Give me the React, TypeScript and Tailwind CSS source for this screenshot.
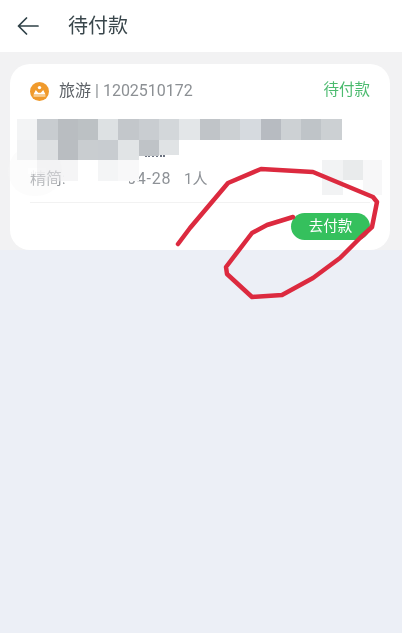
const FONT = "font-['Roboto','Noto_Sans_CJK_SC',sans-serif]";

// Mosaic cells as [column, row, colour], 20.3px grid starting at x=17
const MOSAIC: [number, number, string][] = [
  [0, 0, '#f3f4f5'], [1, 0, '#c8ccd0'], [2, 0, '#b9bdc1'], [3, 0, '#bcc1c4'], [4, 0, '#dde1e3'],
  [5, 0, '#c3c7cb'], [6, 0, '#c9cdd1'], [7, 0, '#d3d7da'], [8, 0, '#e3e6e8'], [9, 0, '#c0c4c8'],
  [10, 0, '#ccd0d3'], [11, 0, '#d6dadf'], [12, 0, '#b7bbc1'], [13, 0, '#cdd1d4'], [14, 0, '#bfc4c8'],
  [15, 0, '#ccd0d3'],
  [0, 1, '#f1f2f3'], [1, 1, '#dde0e2'], [2, 1, '#b9bdc1'], [3, 1, '#c9cdd0'], [4, 1, '#c8ccd0'],
  [5, 1, '#e1e4e6'],
  [1, 2, 'rgba(225,227,229,0.35)'], [2, 2, 'rgba(230,231,233,0.4)'], [4, 2, '#f4f5f6'], [5, 2, '#f8f8f9'],
];

const SCRIBBLE =
  '178,244 190,228 228,183 261,169 313,172 337,182 373,197 377,202 372,227 360,238 340,258 313,278 282,295 252,297 227,274 226,267 252,233 267,225 293,217';

function BackArrow() {
  return (
    <svg width="22" height="18" viewBox="0 0 22 18" className="shrink-0 text-[#2f4147]">
      <path
        d="M21 9 H1.5 M9.5 1 L1.5 9 L9.5 17"
        fill="none"
        stroke="currentColor"
        strokeWidth="1.7"
        strokeLinecap="round"
        strokeLinejoin="round"
      />
    </svg>
  );
}

function TripIcon() {
  return (
    <svg width="19" height="19" viewBox="0 0 19 19" className="shrink-0">
      <circle cx="9.5" cy="9.5" r="9.5" fill="#f09a2c" />
      <circle cx="9.5" cy="5.6" r="1.7" fill="#fff" />
      <path d="M3.5 12.6 L5.8 8 L8.2 10.8 H10.8 L13.2 8 L15.5 12.6 Z" fill="#fff" />
      <rect x="3.5" y="13.2" width="12" height="1.5" fill="#f8d9a8" />
    </svg>
  );
}

function Mosaic() {
  return (
    <div className="absolute left-[17px] top-[119px] grid grid-cols-[repeat(16,20.3px)] grid-rows-[repeat(3,20.5px)]">
      {MOSAIC.map(([col, row, color]) => (
        <div
          key={`${col}-${row}`}
          style={{ gridColumnStart: col + 1, gridRowStart: row + 1, backgroundColor: color }}
        />
      ))}
      {/* these two were cut short in the picture, over the leftover line of text */}
      <div className="col-start-7 row-start-2 h-[16px] bg-[#bfc3c7]" />
      <div className="col-start-8 row-start-2 h-[15px] bg-[#e0e3e5]" />
    </div>
  );
}

export default function App() {
  return (
    <div className={`relative flex h-[633px] w-[402px] flex-col overflow-hidden bg-[#eceff6] blur-[0.4px] ${FONT}`}>
      <header className="flex h-[52px] shrink-0 items-center gap-[29px] bg-white pl-[17px]">
        <BackArrow />
        <h1 className="text-[20px] leading-none font-normal text-[#3a474c]">待付款</h1>
      </header>

      <section className="bg-[#f2f2f3] pt-[12px] pr-[12px] pl-[10px]">
        <div className="flex h-[186px] flex-col rounded-[20px] bg-white px-[20px]">
          <div className="flex h-[54px] shrink-0 items-center justify-between">
            <div className="flex items-center gap-[10px]">
              <TripIcon />
              <span className="text-[16px] text-[#5c6166]">旅游</span>
              <span className="ml-[-6px] text-[16px] text-[#8c9094]">| 1202510172</span>
            </div>
            <span className="text-[15.5px] text-[#4cbb6f]">待付款</span>
          </div>

          <div className="mt-[49px] flex h-[24px] shrink-0 items-center text-[#8e9297]">
            <span className="w-[97px] text-[16px]">精简:</span>
            <span className="w-[57px] text-[16px] tracking-[0.8px]">04-28</span>
            <span className="text-[15px]">1人</span>
          </div>

          <div className="mt-[11px] flex h-[48px] items-center justify-end border-t border-[#f2f2f2]">
            <button className="flex h-[27px] w-[79px] items-center justify-center rounded-full bg-[#35c05d] text-[14.5px] text-white">
              去付款
            </button>
          </div>
        </div>
      </section>

      {/* smudges and mosaic that hide the order name */}
      <div className="absolute left-[8px] top-[146px] h-[50px] w-[54px] rounded-[26px] bg-[#f7f7f8]/40" />
      <div className="absolute left-[28px] top-[168px] h-[6px] w-[18px] bg-white/80" />
      <div className="absolute left-[63px] top-[165px] h-[34px] w-[60px] rounded-b-[24px] bg-white" />
      <div className="absolute left-[120px] top-[170px] h-[20px] w-[9px] bg-white" />
      <div className="absolute left-[145px] top-[155px] h-[3px] w-[20px] border-t-2 border-dotted border-[#6b7280]" />
      <div className="absolute left-[322px] top-[160px] flex h-[35px] w-[60px]">
        <div className="h-full w-[21px] bg-[#f2f3f4]" />
        <div className="h-[20px] w-[20px] bg-[#e9ebec]" />
        <div className="h-full w-[19px] bg-[#f7f7f8]" />
      </div>
      <Mosaic />

      <svg className="pointer-events-none absolute inset-0" width="402" height="633" viewBox="0 0 402 633">
        <polyline
          points={SCRIBBLE}
          fill="none"
          stroke="#dc2a3f"
          strokeWidth="4.5"
          strokeLinecap="round"
          strokeLinejoin="round"
        />
      </svg>
    </div>
  );
}
